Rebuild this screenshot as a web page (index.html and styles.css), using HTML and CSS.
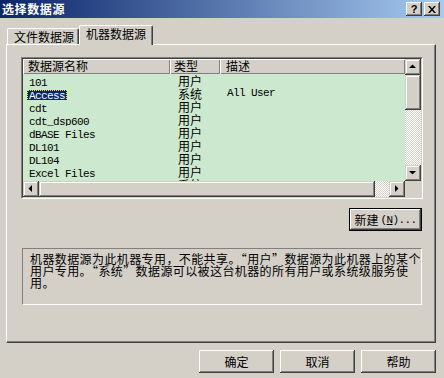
FILE: index.html
```html
<!DOCTYPE html>
<html lang="zh-CN">
<head>
<meta charset="utf-8">
<title>选择数据源</title>
<link rel="stylesheet" href="styles.css">
</head>
<body>
<div class="window">
  <div class="titlebar">
    <span class="title">选择数据源</span>
    <div class="caption-btns">
      <span class="cbtn">?</span>
      <span class="cbtn"><svg width="8" height="7" viewBox="0 0 8 7"><path d="M0 0h2l2 2.5L6 0h2L5 3.5 8 7H6L4 4.5 2 7H0l3-3.5z" fill="#000"/></svg></span>
    </div>
  </div>

  <div class="tabs">
    <div class="tab">文件数据源</div>
    <div class="tab active">机器数据源</div>
  </div>

  <div class="panel">
    <div class="listview">
      <div class="lv-grid">
        <div class="lv-main">
          <div class="lv-header">
            <div class="hcell c1">数据源名称</div>
            <div class="hcell c2">类型</div>
            <div class="hcell c3">描述</div>
          </div>
          <div class="lv-rows">
            <div class="row"><span class="c1"><span class="name">101</span></span><span class="c2">用户</span><span class="c3"></span></div>
            <div class="row"><span class="c1"><span class="name selected">Access</span></span><span class="c2">系统</span><span class="c3 mono">All User</span></div>
            <div class="row"><span class="c1"><span class="name">cdt</span></span><span class="c2">用户</span><span class="c3"></span></div>
            <div class="row"><span class="c1"><span class="name">cdt_dsp600</span></span><span class="c2">用户</span><span class="c3"></span></div>
            <div class="row"><span class="c1"><span class="name">dBASE Files</span></span><span class="c2">用户</span><span class="c3"></span></div>
            <div class="row"><span class="c1"><span class="name">DL101</span></span><span class="c2">用户</span><span class="c3"></span></div>
            <div class="row"><span class="c1"><span class="name">DL104</span></span><span class="c2">用户</span><span class="c3"></span></div>
            <div class="row"><span class="c1"><span class="name">Excel Files</span></span><span class="c2">用户</span><span class="c3"></span></div>
            <div class="row"><span class="c1"><span class="name">FHX Decoration Mixture</span></span><span class="c2">系统</span><span class="c3"></span></div>
          </div>
        </div>
        <div class="vscroll">
          <div class="sbtn"><svg width="16" height="16" viewBox="0 0 16 16"><path d="M4 9h7L7.5 5.5z" fill="#000"/></svg></div>
          <div class="thumb v"></div>
          <div class="track"></div>
          <div class="sbtn"><svg width="16" height="16" viewBox="0 0 16 16"><path d="M4 6h7L7.5 9.5z" fill="#000"/></svg></div>
        </div>
        <div class="hscroll">
          <div class="sbtn"><svg width="16" height="16" viewBox="0 0 16 16"><path d="M9 4v7L5.5 7.5z" fill="#000"/></svg></div>
          <div class="thumb h"></div>
          <div class="track"></div>
          <div class="sbtn"><svg width="16" height="16" viewBox="0 0 16 16"><path d="M6 4v7L9.5 7.5z" fill="#000"/></svg></div>
        </div>
        <div class="corner"></div>
      </div>
    </div>

    <div class="btn default new-btn">新建<span class="half">(<u>N</u>)...</span></div>

    <div class="desc">机器数据源为此机器专用，不能共享。“用户”数据源为此机器上的某个<br>用户专用。“系统”数据源可以被这台机器的所有用户或系统级服务使<br>用。</div>
  </div>

  <div class="footer">
    <div class="btn">确定</div>
    <div class="btn">取消</div>
    <div class="btn">帮助</div>
  </div>
</div>
</body>
</html>
```

FILE: styles.css
```css
html, body {
  margin: 0;
  padding: 0;
}
body {
  width: 444px;
  height: 378px;
  overflow: hidden;
  background: #d4d0c8;
  font-family: "Noto Sans CJK SC", "Liberation Sans", sans-serif;
  font-size: 12px;
  color: #000;
}
.window {
  display: flex;
  flex-direction: column;
  width: 444px;
  height: 378px;
}

/* title bar */
.titlebar {
  height: 18px;
  flex: none;
  display: flex;
  align-items: center;
  justify-content: space-between;
  padding: 0 4px 0 2px;
  background: linear-gradient(to right, #0a246a, #a6caf0);
}
.title {
  color: #fff;
  font-weight: bold;
  font-size: 12px;
  letter-spacing: 0.6px;
  line-height: 14px;
}
.caption-btns {
  display: flex;
  gap: 2px;
}
.cbtn {
  width: 16px;
  height: 14px;
  box-sizing: border-box;
  display: flex;
  align-items: center;
  justify-content: center;
  background: #d4d0c8;
  box-shadow: inset -1px -1px #404040, inset 1px 1px #fff, inset -2px -2px #808080;
  font-family: "Liberation Sans", sans-serif;
  font-weight: bold;
  font-size: 11px;
  line-height: 14px;
}

/* tabs */
.tabs {
  flex: none;
  display: flex;
  align-items: flex-end;
  height: 19px;
  margin: 7px 0 0 7px;
  position: relative;
  z-index: 2;
}
.tab {
  box-sizing: border-box;
  height: 16px;
  width: 72px;
  padding-left: 6px;
  line-height: 15px;
  border-top: 1px solid #fff;
  border-left: 1px solid #fff;
  border-right: 1px solid #404040;
  box-shadow: inset -1px 0 #808080;
  border-radius: 2px 2px 0 0;
  background: #d4d0c8;
  white-space: nowrap;
}
.tab.active {
  width: 74px;
  height: 20px;
  margin-bottom: -1px;
  line-height: 16px;
}

/* panel */
.panel {
  flex: none;
  box-sizing: border-box;
  width: 430px;
  height: 299px;
  margin-left: 6px;
  border-top: 1px solid #fff;
  border-left: 1px solid #fff;
  border-right: 1px solid #404040;
  border-bottom: 1px solid #404040;
  box-shadow: inset -1px -1px #808080;
  display: flex;
  flex-direction: column;
  position: relative;
  z-index: 1;
}

/* list view */
.listview {
  margin: 12px 0 0 14px;
  width: 402px;
  height: 142px;
  box-sizing: border-box;
  border: 1px solid;
  border-color: #808080 #fff #fff #808080;
}
.lv-grid {
  box-sizing: border-box;
  height: 100%;
  border: 1px solid;
  border-color: #404040 #d4d0c8 #d4d0c8 #404040;
  display: grid;
  grid-template-columns: 382px 16px;
  grid-template-rows: 122px 16px;
}
.lv-main {
  overflow: hidden;
  background: #cce8cf;
}
.lv-header {
  display: flex;
  height: 15px;
}
.hcell {
  box-sizing: border-box;
  height: 15px;
  line-height: 14px;
  padding-left: 5px;
  background: #d4d0c8;
  box-shadow: inset 1px 1px #fff, inset -1px -1px #808080;
  white-space: nowrap;
}
.hcell.c1 { width: 147px; }
.hcell.c2 { width: 50px; padding-left: 4px; }
.hcell.c3 { width: 185px; padding-left: 6px; }

.row {
  display: flex;
  height: 13px;
  line-height: 13px;
  white-space: nowrap;
}
.row .c1 { width: 147px; padding-left: 4px; box-sizing: border-box; overflow: hidden; }
.row .c2 { width: 50px; padding-left: 8px; box-sizing: border-box; }
.row .c3 { width: 185px; padding-left: 7px; box-sizing: border-box; }
.name, .mono {
  font-family: "Liberation Mono", monospace;
  font-size: 11px;
  letter-spacing: -0.6px;
}
.name {
  display: inline-block;
  padding: 0 2px;
  height: 13px;
}
.name.selected {
  background: #0a246a;
  color: #fff;
  outline: 1px dotted #e8e070;
  outline-offset: -1px;
}

/* scrollbars */
.vscroll {
  display: flex;
  flex-direction: column;
}
.hscroll {
  display: flex;
}
.sbtn, .thumb {
  flex: none;
  box-sizing: border-box;
  background: #d4d0c8;
  box-shadow: inset -1px -1px #404040, inset 1px 1px #d4d0c8, inset -2px -2px #808080, inset 2px 2px #fff;
}
.sbtn {
  width: 16px;
  height: 16px;
}
.sbtn svg { display: block; }
.thumb.v { width: 16px; height: 35px; }
.thumb.h { height: 16px; width: 336px; }
.track {
  flex: 1;
  background: repeating-conic-gradient(#fff 0 25%, #d4d0c8 0 50%) 0 0 / 2px 2px;
}
.corner {
  background: #d4d0c8;
}

/* buttons */
.btn {
  box-sizing: border-box;
  width: 75px;
  height: 23px;
  display: flex;
  align-items: center;
  justify-content: center;
  background: #d4d0c8;
  box-shadow: inset -1px -1px #404040, inset 1px 1px #fff, inset -2px -2px #808080, inset 2px 2px #d4d0c8;
  line-height: 14px;
}
.btn.default {
  border: 1px solid #000;
  box-shadow: inset -1px -1px #404040, inset 1px 1px #fff, inset -2px -2px #808080;
}
.new-btn {
  width: 73px;
  align-self: flex-end;
  margin: 9px 13px 0 0;
}
.half {
  font-family: "Liberation Mono", monospace;
  font-size: 11px;
  letter-spacing: -0.6px;
  margin-left: 2px;
}

/* description */
.desc {
  box-sizing: border-box;
  width: 400px;
  height: 57px;
  margin: 17px 0 0 15px;
  padding: 4px 0 0 7px;
  border: 1px solid;
  border-color: #808080 #fff #fff #808080;
  line-height: 12px;
  white-space: nowrap;
  letter-spacing: 0.4px;
}

/* footer */
.footer {
  display: flex;
  justify-content: flex-end;
  gap: 6px;
  margin-top: 7px;
  padding-right: 8px;
}
```
